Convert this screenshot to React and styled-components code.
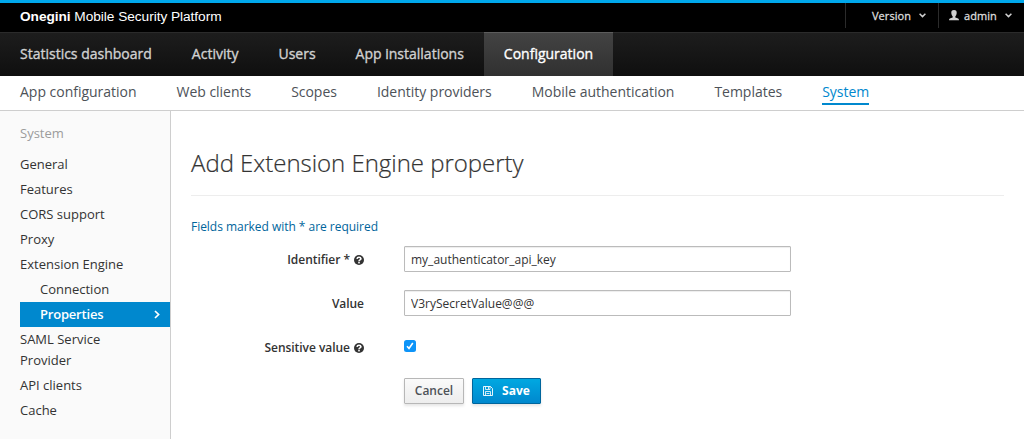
import React from "react";
import styled, { createGlobalStyle } from "styled-components";

const Global = createGlobalStyle`
  *, *::before, *::after { box-sizing: border-box; }
  body { margin: 0; background: #fff; color: #333; font: 12px/20px "Open Sans", sans-serif; overflow: hidden; }
`;

const Page = styled.div`
  display: flex;
  flex-direction: column;
  height: 100vh;
`;

const TopBar = styled.header`
  display: flex;
  justify-content: space-between;
  flex: none;
  height: 32px;
  padding-left: 20px;
  border-top: 3px solid #00a8ec;
  background: #000;
  color: #fff;
`;

const Brand = styled.div`
  font: 13.7px/28px "Liberation Sans", Arial, sans-serif;
  letter-spacing: -0.05px;
  white-space: nowrap;
`;

const Utilities = styled.div`
  display: flex;
  height: 25px;
`;

const Utility = styled.div`
  display: flex;
  align-items: center;
  width: ${(p) => p.$width}px;
  padding-left: ${(p) => p.$pad}px;
  border-left: 1px solid #2b2b2b;
  color: #dbdbdb;
  font-size: 11px;
  letter-spacing: 0.06px;
  -webkit-text-stroke: 0.3px currentColor;
  svg:first-child { margin-right: 5px; }
  svg:last-child { margin-left: 8px; }
`;

const MainNav = styled.nav`
  display: flex;
  flex: none;
  height: 44px;
  border-top: 1px solid #2b2b2b;
  background: linear-gradient(#1d1d1d, #0f0f0f);
`;

const MainLink = styled.a`
  height: 44px;
  margin-top: -1px;
  padding: 0 20px;
  border-top: 1px solid ${(p) => (p.$active ? "#5c5c5c" : "transparent")};
  background: ${(p) => (p.$active ? "linear-gradient(#434343, #303030)" : "none")};
  color: ${(p) => (p.$active ? "#fff" : "#d1d1d1")};
  font-size: 14px;
  line-height: 42px;
  -webkit-text-stroke: 0.35px currentColor;
  white-space: nowrap;
`;

const SubNav = styled.nav`
  display: flex;
  align-items: flex-start;
  gap: 40px;
  flex: none;
  height: 35px;
  padding: 5px 20px 0;
  border-bottom: 1px solid #cecece;
`;

const SubLink = styled.a`
  height: 24px;
  border-bottom: 2px solid ${(p) => (p.$active ? "#0088ce" : "transparent")};
  color: ${(p) => (p.$active ? "#0088ce" : "#4d5258")};
  font-size: 14px;
  line-height: 22px;
  letter-spacing: -0.02px;
  white-space: nowrap;
`;

const Body = styled.div`
  display: flex;
  flex: 1;
`;

const Sidebar = styled.aside`
  flex: none;
  width: 171px;
  padding: 12px 0 0 20px;
  border-right: 1px solid #cecece;
  background: #fafafa;
  font-size: 13px;
  line-height: 21px;
`;

const SideTitle = styled.div`
  margin-bottom: 8px;
  color: #9c9c9c;
`;

const SideItem = styled.a`
  display: flex;
  justify-content: space-between;
  align-items: center;
  padding: 2px ${(p) => (p.$active ? 10 : 20)}px 2px ${(p) => (p.$nested ? 20 : 0)}px;
  background: ${(p) => (p.$active ? "#0088ce" : "none")};
  color: ${(p) => (p.$active ? "#fff" : "#333")};
  font-weight: ${(p) => (p.$active ? 600 : 400)};
  letter-spacing: ${(p) => (p.$active ? "-0.2px" : "normal")};
`;

const Content = styled.main`
  flex: 1;
  padding: 36px 20px 0;
`;

const Title = styled.h1`
  margin: 0;
  height: 49px;
  border-bottom: 1px solid #ededed;
  font-size: 24px;
  font-weight: 300;
  line-height: 32px;
  letter-spacing: -0.03px;
  -webkit-text-stroke: 0.2px currentColor;
`;

const Hint = styled.p`
  margin: 21px 0 9px;
  color: #00659c;
  letter-spacing: -0.03px;
`;

const Row = styled.div`
  display: flex;
  align-items: center;
  gap: 40px;
  height: 26px;
  margin-bottom: 18px;
`;

const Label = styled.label`
  display: flex;
  justify-content: flex-end;
  align-items: center;
  gap: 4px;
  width: 173px;
  padding-top: 2px;
  font-weight: 600;
  letter-spacing: -0.04px;
`;

const Input = styled.input`
  width: 387px;
  height: 26px;
  padding: 2px 6px;
  border: 1px solid #bbb;
  border-radius: 1px;
  box-shadow: inset 0 1px 1px rgba(0, 0, 0, 0.075);
  color: #333;
  font: 12px "Open Sans", sans-serif;
  outline: none;
`;

const CheckBox = styled.span`
  display: flex;
  align-items: center;
  justify-content: center;
  width: 12px;
  height: 12px;
  margin-bottom: 2px;
  border-radius: 2.5px;
  background: #0d94f8;
`;

const Actions = styled.div`
  display: flex;
  gap: 8px;
  padding-left: 213px;
`;

const Button = styled.button`
  display: flex;
  align-items: center;
  justify-content: center;
  gap: 9px;
  width: ${(p) => p.$width}px;
  height: 26px;
  padding: 0;
  border: 1px solid ${(p) => (p.$primary ? "#00659c" : "#b7b7b7")};
  border-radius: 1px;
  background: ${(p) => (p.$primary ? "linear-gradient(#00a8e1, #0088ce)" : "linear-gradient(#fafafa, #ededed)")};
  box-shadow: 0 2px 3px rgba(3, 3, 3, 0.1);
  color: ${(p) => (p.$primary ? "#fff" : "#4d5258")};
  font: ${(p) => (p.$primary ? 700 : 600)} 12px/20px "Open Sans", sans-serif;
`;

const Angle = () => (
  <svg width="7" height="5" viewBox="0 0 7 5" fill="none" stroke="#d1d1d1" strokeWidth="1.5">
    <path d="M.6.8 3.5 3.6 6.4.8" />
  </svg>
);

const AngleRight = () => (
  <svg width="6" height="9" viewBox="0 0 6 9" fill="none" stroke="#fff" strokeWidth="1.7">
    <path d="M1 1 4.6 4.5 1 8" />
  </svg>
);

const UserIcon = () => (
  <svg width="10" height="11" viewBox="0 0 10 11" fill="#d1d1d1">
    <path d="M5 0C7 0 7.9 1.2 7.7 3.1 7.6 4.6 7 5.8 6.3 6.4V7.6L9.2 8.6Q10 9 10 10.3H0Q0 9 .8 8.6L3.7 7.6V6.4C3 5.8 2.4 4.6 2.3 3.1 2.1 1.2 3 0 5 0Z" />
  </svg>
);

const HelpIcon = () => (
  <svg width="10" height="10" viewBox="0 0 10 10">
    <circle cx="5" cy="5" r="5" fill="#333" />
    <path d="M3 3.8Q3.3 2.2 5 2.2T6.9 3.7C6.9 5 5 4.7 5 6.2" fill="none" stroke="#fff" strokeWidth="1.6" />
    <rect x="4.2" y="6.8" width="1.6" height="1.6" fill="#fff" />
  </svg>
);

const SaveIcon = () => (
  <svg width="10" height="10" viewBox="0 0 10 10" fill="none" stroke="#fff" strokeOpacity=".9">
    <path d="M.5.5H7.5L9.5 2.5V9.5H.5Z" />
    <path d="M2.5.5V3.5H7V.5M5.5 1V3M2.5 9.5V5.5H7.5V9.5M3.5 7.5H6.5" strokeWidth=".9" />
  </svg>
);

const Check = () => (
  <svg width="8" height="8" viewBox="0 0 8 8" fill="none" stroke="#fff" strokeWidth="1.6">
    <path d="M1 4.3 3 6.4 6.8 1" />
  </svg>
);

const mainLinks = ["Statistics dashboard", "Activity", "Users", "App installations", "Configuration"];
const subLinks = ["App configuration", "Web clients", "Scopes", "Identity providers", "Mobile authentication", "Templates", "System"];
const sideLinks = [
  { text: "General" },
  { text: "Features" },
  { text: "CORS support" },
  { text: "Proxy" },
  { text: "Extension Engine" },
  { text: "Connection", nested: true },
  { text: "Properties", nested: true, active: true },
  { text: "SAML Service Provider" },
  { text: "API clients" },
  { text: "Cache" },
];

export default function App() {
  return (
    <Page>
      <Global />
      <TopBar>
        <Brand><b>Onegini</b> Mobile Security Platform</Brand>
        <Utilities>
          <Utility $width={93} $pad={26}>Version<Angle /></Utility>
          <Utility $width={86} $pad={10}><UserIcon />admin<Angle /></Utility>
        </Utilities>
      </TopBar>
      <MainNav>
        {mainLinks.map((t) => <MainLink key={t} $active={t === "Configuration"}>{t}</MainLink>)}
      </MainNav>
      <SubNav>
        {subLinks.map((t) => <SubLink key={t} $active={t === "System"}>{t}</SubLink>)}
      </SubNav>
      <Body>
        <Sidebar>
          <SideTitle>System</SideTitle>
          {sideLinks.map((l) => (
            <SideItem key={l.text} $nested={l.nested} $active={l.active}>
              {l.text}
              {l.active && <AngleRight />}
            </SideItem>
          ))}
        </Sidebar>
        <Content>
          <Title>Add Extension Engine property</Title>
          <Hint>Fields marked with * are required</Hint>
          <Row>
            <Label>Identifier * <HelpIcon /></Label>
            <Input defaultValue="my_authenticator_api_key" spellCheck={false} />
          </Row>
          <Row>
            <Label>Value</Label>
            <Input defaultValue="V3rySecretValue@@@" spellCheck={false} />
          </Row>
          <Row>
            <Label>Sensitive value <HelpIcon /></Label>
            <CheckBox role="checkbox" aria-checked="true"><Check /></CheckBox>
          </Row>
          <Actions>
            <Button $width={60}>Cancel</Button>
            <Button $width={69} $primary><SaveIcon />Save</Button>
          </Actions>
        </Content>
      </Body>
    </Page>
  );
}
